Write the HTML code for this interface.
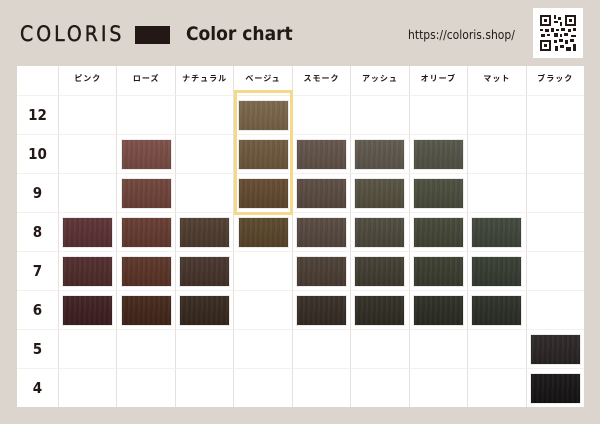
<!DOCTYPE html>
<html><head><meta charset="utf-8"><style>
*{margin:0;padding:0;box-sizing:border-box}
body{width:600px;height:424px;background:#dcd5ce;position:relative;overflow:hidden;font-family:"Liberation Sans","Noto Sans CJK JP",sans-serif;color:#231815}
.logo{position:absolute;left:20px;top:22px;font-size:21px;letter-spacing:3px;font-family:"DejaVu Sans Condensed","Liberation Sans",sans-serif;font-weight:normal;-webkit-text-stroke:0.4px #231815}
.blk{position:absolute;left:135px;top:26px;width:35px;height:18px;background:#231815}
.title{position:absolute;left:186px;top:23px;font-size:19px;font-weight:bold;font-family:"DejaVu Sans Condensed","Liberation Sans",sans-serif;letter-spacing:0}
.url{position:absolute;left:408px;top:28px;font-size:12px;font-family:"DejaVu Sans Condensed","Liberation Sans",sans-serif}
.qr{position:absolute;left:533px;top:8px;width:50px;height:50px;background:#fff}
.tbl{position:absolute;left:17px;top:66px;width:567px;height:341px;background:#fff;display:grid;grid-template-columns:41px repeat(9,1fr);grid-template-rows:29px repeat(8,39px)}
.c{border-left:1px solid #e6e1dc;border-top:1px solid #f3f0ed;position:relative;display:flex;align-items:center;justify-content:center}
.c.l{border-left:none;font-weight:bold;font-size:15px;font-family:"DejaVu Sans Condensed","Liberation Sans",sans-serif}
.h{font-size:8px;font-weight:bold;border-top:none;align-items:flex-start;padding-top:7px;letter-spacing:1px}
.s{width:49px;height:29px;background-image:repeating-linear-gradient(91deg,rgba(0,0,0,.05) 0 1px,rgba(255,255,255,.03) 1px 3px,rgba(0,0,0,.03) 3px 5px),linear-gradient(180deg,rgba(255,255,255,.04),rgba(0,0,0,.08));outline:1px solid rgba(0,0,0,.08)}
.hl{position:absolute;left:234px;top:90px;width:59px;height:125px;border:3px solid #f5d88a;pointer-events:none}
</style></head><body>
<div class="logo">COLORIS</div><div class="blk"></div>
<div class="title">Color chart</div>
<div class="url">https://coloris.shop/</div>
<div class="qr"><svg width="50" height="50" viewBox="0 0 50 50">
<g fill="#231815">
<rect x="7" y="7" width="11" height="11"/><rect x="32" y="7" width="11" height="11"/><rect x="7" y="32" width="11" height="11"/>
<rect x="21" y="7" width="2" height="4"/><rect x="25" y="9" width="3" height="3"/><rect x="21" y="13" width="4" height="2"/><rect x="27" y="14" width="2" height="4"/>
<rect x="7" y="21" width="3" height="2"/><rect x="12" y="21" width="4" height="3"/><rect x="18" y="20" width="3" height="4"/><rect x="23" y="21" width="3" height="2"/><rect x="28" y="20" width="4" height="3"/><rect x="35" y="21" width="3" height="3"/><rect x="40" y="20" width="3" height="3"/>
<rect x="8" y="26" width="4" height="3"/><rect x="14" y="26" width="3" height="2"/><rect x="21" y="25" width="4" height="4"/><rect x="27" y="26" width="2" height="3"/><rect x="31" y="25" width="4" height="3"/><rect x="38" y="27" width="5" height="2"/>
<rect x="21" y="32" width="3" height="3"/><rect x="26" y="31" width="4" height="3"/><rect x="32" y="32" width="3" height="4"/><rect x="37" y="31" width="4" height="3"/>
<rect x="22" y="38" width="3" height="5"/><rect x="27" y="37" width="4" height="3"/><rect x="33" y="39" width="5" height="4"/><rect x="40" y="36" width="3" height="7"/>
</g>
<g fill="#fff"><rect x="9" y="9" width="7" height="7"/><rect x="34" y="9" width="7" height="7"/><rect x="9" y="34" width="7" height="7"/></g>
<g fill="#231815"><rect x="11" y="11" width="3" height="3"/><rect x="36" y="11" width="3" height="3"/><rect x="11" y="36" width="3" height="3"/></g>
</svg></div>
<div class="tbl">
<div class="c l h"></div><div class="c h">ピンク</div><div class="c h">ローズ</div><div class="c h">ナチュラル</div><div class="c h">ベージュ</div><div class="c h">スモーク</div><div class="c h">アッシュ</div><div class="c h">オリーブ</div><div class="c h">マット</div><div class="c h">ブラック</div>

<div class="c l">12</div><div class="c"></div><div class="c"></div><div class="c"></div><div class="c"><div class="s" style="background-color:#7a6448"></div></div><div class="c"></div><div class="c"></div><div class="c"></div><div class="c"></div><div class="c"></div>

<div class="c l">10</div><div class="c"></div><div class="c"><div class="s" style="background-color:#7a4c44"></div></div><div class="c"></div><div class="c"><div class="s" style="background-color:#6e583c"></div></div><div class="c"><div class="s" style="background-color:#625248"></div></div><div class="c"><div class="s" style="background-color:#5e574c"></div></div><div class="c"><div class="s" style="background-color:#535446"></div></div><div class="c"></div><div class="c"></div>

<div class="c l">9</div><div class="c"></div><div class="c"><div class="s" style="background-color:#6e4238"></div></div><div class="c"></div><div class="c"><div class="s" style="background-color:#62492e"></div></div><div class="c"><div class="s" style="background-color:#5a4a40"></div></div><div class="c"><div class="s" style="background-color:#55503f"></div></div><div class="c"><div class="s" style="background-color:#4a4c3c"></div></div><div class="c"></div><div class="c"></div>

<div class="c l">8</div><div class="c"><div class="s" style="background-color:#5a3032"></div></div><div class="c"><div class="s" style="background-color:#64392e"></div></div><div class="c"><div class="s" style="background-color:#4e3b2e"></div></div><div class="c"><div class="s" style="background-color:#59452a"></div></div><div class="c"><div class="s" style="background-color:#55473e"></div></div><div class="c"><div class="s" style="background-color:#4d483c"></div></div><div class="c"><div class="s" style="background-color:#434535"></div></div><div class="c"><div class="s" style="background-color:#3f443a"></div></div><div class="c"></div>

<div class="c l">7</div><div class="c"><div class="s" style="background-color:#4f2a2a"></div></div><div class="c"><div class="s" style="background-color:#5a3226"></div></div><div class="c"><div class="s" style="background-color:#45332a"></div></div><div class="c"></div><div class="c"><div class="s" style="background-color:#4a3d33"></div></div><div class="c"><div class="s" style="background-color:#403c30"></div></div><div class="c"><div class="s" style="background-color:#3a3c2e"></div></div><div class="c"><div class="s" style="background-color:#363b30"></div></div><div class="c"></div>

<div class="c l">6</div><div class="c"><div class="s" style="background-color:#3e1e20"></div></div><div class="c"><div class="s" style="background-color:#432519"></div></div><div class="c"><div class="s" style="background-color:#36271d"></div></div><div class="c"></div><div class="c"><div class="s" style="background-color:#362b24"></div></div><div class="c"><div class="s" style="background-color:#2f2c23"></div></div><div class="c"><div class="s" style="background-color:#2b2c22"></div></div><div class="c"><div class="s" style="background-color:#2a2e26"></div></div><div class="c"></div>

<div class="c l">5</div><div class="c"></div><div class="c"></div><div class="c"></div><div class="c"></div><div class="c"></div><div class="c"></div><div class="c"></div><div class="c"></div><div class="c"><div class="s" style="background-color:#2a2424"></div></div>

<div class="c l">4</div><div class="c"></div><div class="c"></div><div class="c"></div><div class="c"></div><div class="c"></div><div class="c"></div><div class="c"></div><div class="c"></div><div class="c"><div class="s" style="background-color:#151313"></div></div>
</div>
<div class="hl"></div>
</body></html>
